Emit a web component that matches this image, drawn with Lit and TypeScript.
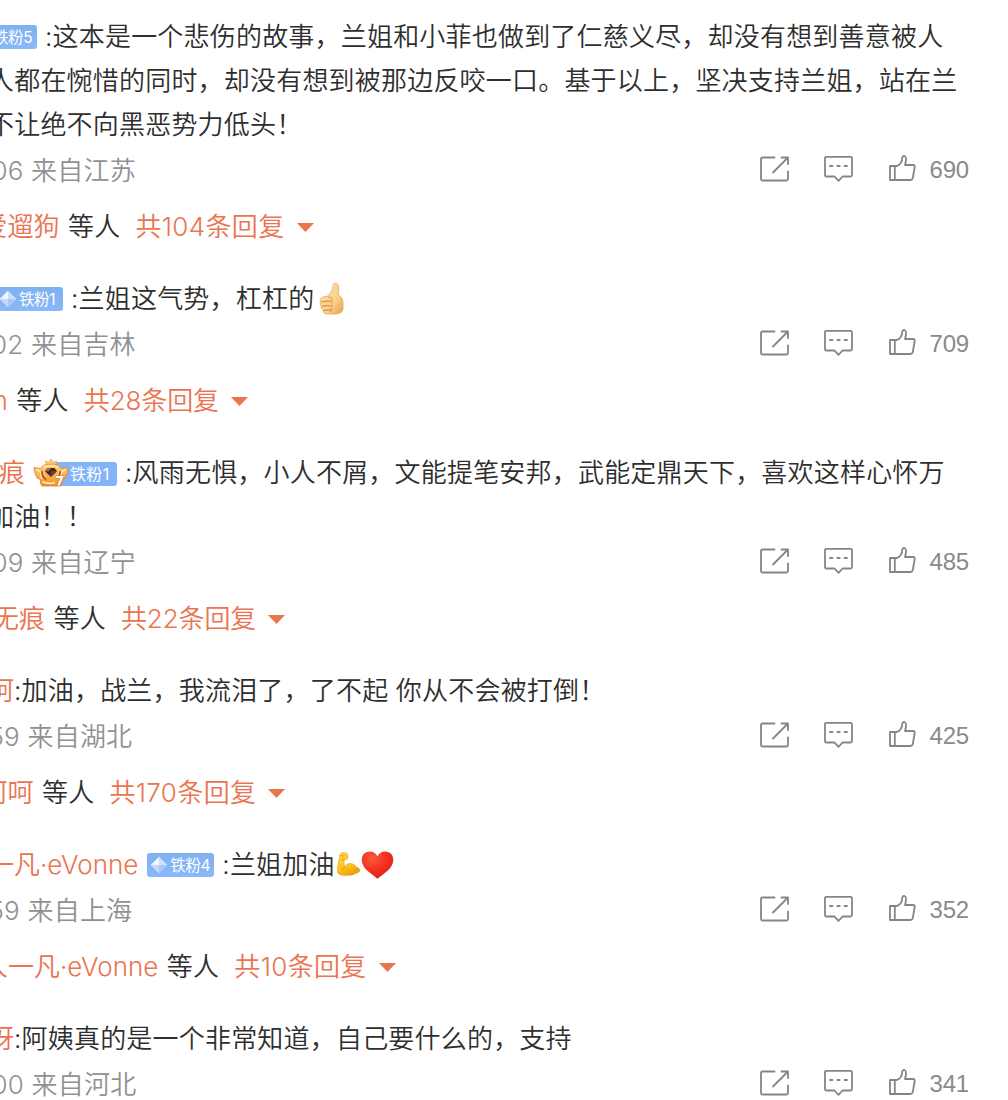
import { LitElement, html, css, nothing } from "lit";
import { customElement, property } from "lit/decorators.js";

type Run =
  | { kind: "text" | "name"; text: string }
  | { kind: "badge"; level: string; style: "gem" | "crown" }
  | { kind: "emoji"; name: "thumb" | "arm" | "heart" };

interface Line {
  shift: number;
  runs: Run[];
}

interface Comment {
  lines: Line[];
  time: string;
  timeShift: number;
  place: string;
  likes: number;
  reply?: { who: string; shift: number; count: number };
}

const t = (text: string): Run => ({ kind: "text", text });
const n = (text: string): Run => ({ kind: "name", text });

const comments: Comment[] = [
  {
    lines: [
      {
        shift: -39,
        runs: [
          { kind: "badge", level: "5", style: "gem" },
          t(":这本是一个悲伤的故事，兰姐和小菲也做到了仁慈义尽，却没有想到善意被人"),
        ],
      },
      { shift: -12, runs: [t("人都在惋惜的同时，却没有想到被那边反咬一口。基于以上，坚决支持兰姐，站在兰")] },
      { shift: -12, runs: [t("不让绝不向黑恶势力低头！")] },
    ],
    time: "06",
    timeShift: -8.5,
    place: "江苏",
    likes: 690,
    reply: { who: "爱遛狗", shift: -18.5, count: 104 },
  },
  {
    lines: [
      {
        shift: -13,
        runs: [
          { kind: "badge", level: "1", style: "gem" },
          t(":兰姐这气势，杠杠的"),
          { kind: "emoji", name: "thumb" },
        ],
      },
    ],
    time: "02",
    timeShift: -9,
    place: "吉林",
    likes: 709,
    reply: { who: "n", shift: -7.5, count: 28 },
  },
  {
    lines: [
      {
        shift: -1,
        runs: [
          n("痕"),
          { kind: "badge", level: "1", style: "crown" },
          t(":风雨无惧，小人不屑，文能提笔安邦，武能定鼎天下，喜欢这样心怀万"),
        ],
      },
      { shift: -12, runs: [t("加油！！")] },
    ],
    time: "09",
    timeShift: -8.5,
    place: "辽宁",
    likes: 485,
    reply: { who: "无痕", shift: -7, count: 22 },
  },
  {
    lines: [{ shift: -12, runs: [n("呵"), t(":加油，战兰，我流泪了，了不起 你从不会被打倒！")] }],
    time: "59",
    timeShift: -11.5,
    place: "湖北",
    likes: 425,
    reply: { who: "呵呵", shift: -18.5, count: 170 },
  },
  {
    lines: [
      {
        shift: -12,
        runs: [
          n("一凡·eVonne"),
          { kind: "badge", level: "4", style: "gem" },
          t(":兰姐加油"),
          { kind: "emoji", name: "arm" },
          { kind: "emoji", name: "heart" },
        ],
      },
    ],
    time: "59",
    timeShift: -11.5,
    place: "上海",
    likes: 352,
    reply: { who: "人一凡·eVonne", shift: -18, count: 10 },
  },
  {
    lines: [{ shift: -12, runs: [n("呀"), t(":阿姨真的是一个非常知道，自己要什么的，支持")] }],
    time: "00",
    timeShift: -8.5,
    place: "河北",
    likes: 341,
  },
];

const gem = html`<svg class="gem" width="18" height="18" viewBox="0 0 18 18">
  <path d="M9 1 L17 9 L9 17 L1 9Z" fill="#c4dafc" stroke="#c4dafc" stroke-linejoin="round" />
  <path d="M9 1 L17 9 L9 9Z" fill="#c9defd" />
  <path d="M9 1 L9 9 L1 9Z" fill="#f1f6ff" />
  <path d="M9 9 L17 9 L9 17Z" fill="#a9c6f8" />
</svg>`;

const crown = html`<svg class="crown" width="36" height="30" viewBox="0 0 36 30">
  <defs>
    <linearGradient id="gold" x1="0" y1="0" x2="0" y2="1">
      <stop offset="0" stop-color="#ffd07c" />
      <stop offset=".55" stop-color="#fbb14e" />
      <stop offset="1" stop-color="#ee8a30" />
    </linearGradient>
  </defs>
  <path d="M12.500 3 L15.500 4.500 L18 1 L20.500 4.500 L23.500 3 L22.500 8 H13.500Z" fill="#ffcd80" stroke="#f0a04a" stroke-width=".8" />
  <path d="M1 9.500 L7.500 10.500 Q10 6 18 6 Q26 6 28.500 10.500 L35 9.500 Q34.500 15 32.500 20 L29 21.500 Q29.500 24 28 28 H9 Q6.500 25 7.500 21.500 L4 20 Q1.500 15 1 9.500Z" fill="url(#gold)" stroke="#e08a35" stroke-width=".9" stroke-linejoin="round" />
  <path d="M3.500 11.500 L7.500 14 L8.500 21 M32.500 11.500 L28.500 14 L27.500 18 M11 9 Q18 6.500 25 9" fill="none" stroke="#ffe8b6" stroke-width="1.500" />
  <path d="M9 13 Q8 18 13 21.500 M27 13 Q28 17 23 20.500" fill="none" stroke="#8e4a24" stroke-width="1.400" />
  <path d="M14.500 10 H21.500 L24 13.200 L18 19 L12 13.200Z" fill="#4f241d" />
  <path d="M14.500 10 H18 L16 13.200 H12Z" fill="#9c6c5e" />
  <path d="M18 13.200 H24 L18 19Z" fill="#7b4034" />
  <path d="M9.500 24 Q16 26.500 22 24.500" fill="none" stroke="#ffefc4" stroke-width="1.800" />
  <path d="M23 19 H29 L25.500 27.500" fill="none" stroke="#ec8b34" stroke-width="3.600" />
  <path d="M23 19 H29 L25.500 27.500" fill="none" stroke="#fff" stroke-width="2" />
</svg>`;

const emojis = {
  thumb: html`<svg class="thumb" width="25" height="33" viewBox="0 0 25 33">
    <defs>
      <linearGradient id="skin" x1="0" y1="0" x2="1" y2="1">
        <stop offset="0" stop-color="#ffe3a8" />
        <stop offset=".6" stop-color="#fbd28a" />
        <stop offset="1" stop-color="#e5a04e" />
      </linearGradient>
    </defs>
    <path d="M14.500 2 Q18-.5 19.500 4 Q20.200 8 19 13 Q24 15 24 21 V27 Q23 32 16 32 H8 Q4 32 4 28 Q1.500 27 2.500 24.500 Q0 23 1.500 20 Q0 16 4 15 L9 14 Q14 9 14.500 2Z" fill="url(#skin)" stroke="#e0a557" stroke-width=".7" />
    <path d="M3 20 Q8 18.500 12 19.500 M3 24.500 Q8 23 12 24 M5 28.500 Q9 27.500 12 28" fill="none" stroke="#d09040" stroke-width="1.200" stroke-linecap="round" />
    <path d="M9 15 Q14 15 12.500 18 Q14 19.500 12.500 21.500 Q14 23 12.500 25.500 Q14 28 11 30" fill="none" stroke="#d79a4b" stroke-width=".9" />
  </svg>`,
  arm: html`<svg class="arm" width="25" height="26" viewBox="0 0 26 26">
    <defs>
      <linearGradient id="bicep" x1="0" y1="0" x2=".4" y2="1">
        <stop offset="0" stop-color="#ffd84a" />
        <stop offset=".7" stop-color="#fcc21f" />
        <stop offset="1" stop-color="#ee9e12" />
      </linearGradient>
    </defs>
    <path d="M4 3 Q6 .5 9 1 Q12 1 12.500 4 Q13 7 11 8.500 L8.500 9 Q8 12 9 16 Q11 12 16 12.500 Q20 13 21 16.500 Q24 16.500 25 19 Q25 21 23 22 Q17 25.500 9 25 Q3 24.500 1.500 22 Q1 18 2.500 12Z" fill="url(#bicep)" stroke="#eba51c" stroke-width=".6" />
    <path d="M9 16 Q8.500 18 6.500 19 M21 16.500 Q22 18 21.500 19" fill="none" stroke="#d98a10" stroke-width="1" stroke-linecap="round" />
    <path d="M5 4 Q7 5.500 9 4 M8.500 9 Q6.500 9 6.500 7" fill="none" stroke="#d98a10" stroke-width=".9" />
  </svg>`,
  heart: html`<svg class="heart" width="33" height="28" viewBox="0 0 34 29">
    <defs>
      <radialGradient id="red" cx=".35" cy=".25" r=".8">
        <stop offset="0" stop-color="#ff5a3c" />
        <stop offset=".55" stop-color="#f2301f" />
        <stop offset="1" stop-color="#d81e1c" />
      </radialGradient>
    </defs>
    <path d="M17 28.800 Q14.500 26.500 10 23.200 Q.6 16.500 .6 9 Q1 1 9 .6 Q14.500 .8 17 5.500 Q19.500 .8 25 .6 Q33 1 33.400 9 Q33.400 16.500 24 23.200 Q19.500 26.500 17 28.800Z" fill="url(#red)" />
  </svg>`,
};

@customElement("fan-badge")
class FanBadge extends LitElement {
  @property() level = "1";
  @property() look = "gem";
  static styles = css`
    :host {
      display: flex;
      align-items: center;
      height: 44px;
      margin: 0 8px 0 9px;
    }
    .pill {
      box-sizing: border-box;
      display: flex;
      align-items: center;
      height: 24px;
      width: 67px;
      padding-left: 3px;
      border-radius: 3px;
      background: linear-gradient(#7fb0f2, #8ab8f8);
      color: #fff;
      font: 15.5px/24px Inter, "Noto Sans CJK SC", sans-serif;
      white-space: nowrap;
    }
    .gem {
      flex: none;
      margin-right: 2px;
    }
    .crownpill {
      width: 83px;
      margin-top: 2px;
      background: linear-gradient(90deg, transparent 18px, #84b4f7 18px);
      padding-left: 0;
    }
    .crown {
      flex: none;
      margin: -3px 1px 0 -1px;
    }
    .label {
      padding-top: 1px;
      letter-spacing: -0.4px;
    }
    .crownpill .label {
      margin-top: -2px;
      font-size: 16px;
      letter-spacing: 0.3px;
    }
  `;
  render() {
    const isCrown = this.look === "crown";
    return html`<span class="pill ${isCrown ? "crownpill" : ""}"
      >${isCrown ? crown : gem}<span class="label">铁粉${this.level}</span></span
    >`;
  }
}

@customElement("comment-actions")
class CommentActions extends LitElement {
  @property({ type: Number }) likes = 0;
  static styles = css`
    :host {
      display: flex;
      align-items: center;
      height: 44px;
      margin-left: auto;
      padding-right: 39px;
    }
    svg {
      display: block;
      flex: none;
      margin-top: -3px;
      fill: none;
      stroke: #858585;
      stroke-width: 1.8;
      stroke-linejoin: round;
      stroke-linecap: round;
    }
    .share {
      margin-right: 34px;
    }
    .talk {
      margin-right: 34.5px;
    }
    .like {
      margin-right: 14px;
    }
    .count {
      font: 24px/44px "Liberation Sans", Arial, sans-serif;
      letter-spacing: -0.2px;
      color: #8a8a8a;
    }
  `;
  render() {
    return html`
      <svg class="share" width="30" height="28" viewBox="0 0 30 28">
        <path d="M15.500 2.500 H3.500 Q2 2.500 2 4 V24 Q2 25.500 3.500 25.500 H27.500 Q29 25.500 29 24 V16.500" />
        <path d="M14 17.500 L28 3.500 M22.500 2.500 H29 V9" />
      </svg>
      <svg class="talk" width="30" height="28" viewBox="0 0 30 28">
        <path d="M3.500 1.800 H27.500 Q29 1.800 29 3.300 V20 Q29 21.500 27.500 21.500 H19.500 L15.500 25.800 L11.500 21.500 H3.500 Q2 21.500 2 20 V3.300 Q2 1.800 3.500 1.800Z" />
        <path d="M7 11 H9.500 M14.300 11 H16.700 M21.500 11 H24" />
      </svg>
      <svg class="like" width="28" height="28" viewBox="0 0 28 28">
        <path d="M2 11 H9 Q14 9 14.200 3 Q14.800 .4 16.600 1 Q19.300 2 17 10 H25 Q27 10.200 26.700 12 L24.800 23 Q24.300 25 22.500 25 H2Z M6.800 11 V25" />
      </svg>
      <span class="count">${this.likes}</span>
    `;
  }
}

@customElement("app-root")
class AppRoot extends LitElement {
  static styles = css`
    :host {
      display: block;
      width: 1008px;
      height: 1100px;
      overflow: hidden;
      background: #fff;
    }
    .feed {
      padding-top: 15px;
      font-family: Inter, "Noto Sans CJK SC", sans-serif;
      font-size: 26px;
      font-weight: 350;
      line-height: 44px;
      letter-spacing: 0.2px;
      color: #2e2e2e;
    }
    .line,
    .meta,
    .reply {
      display: flex;
      height: 44px;
      white-space: pre;
    }
    .meta {
      margin-top: 2px;
      color: #919191;
    }
    .meta > comment-actions {
      margin-top: -1px;
    }
    .reply {
      margin: 12px 0 28px;
    }
    .name,
    .total {
      color: #eb7350;
    }
    .name,
    .who {
      letter-spacing: 0;
    }
    .who {
      margin-right: 8.5px;
      color: #eb7350;
    }
    .total {
      margin-left: 15px;
      letter-spacing: -0.1px;
    }
    .airy {
      letter-spacing: 0.35px;
    }
    .caret {
      align-self: center;
      width: 17px;
      height: 9px;
      margin: 0 0 0 12px;
      fill: #eb7350;
    }
    .thumb {
      margin: 5px 0 0 5px;
    }
    .arm {
      margin: 8px 0 0 1px;
    }
    .heart {
      margin-top: 8px;
    }
  `;

  private run(r: Run) {
    switch (r.kind) {
      case "badge":
        return html`<fan-badge level=${r.level} look=${r.style}></fan-badge>`;
      case "emoji":
        return emojis[r.name];
      default:
        return html`<span class=${r.kind}>${r.text}</span>`;
    }
  }

  private comment(c: Comment) {
    return html`<article>
      ${c.lines.map(
        (l) => html`<div class="line" style="margin-left:${l.shift}px">${l.runs.map((r) => this.run(r))}</div>`
      )}
      <div class="meta"
        ><span style="margin-left:${c.timeShift}px">${c.time} 来自${c.place}</span
        ><comment-actions likes=${c.likes}></comment-actions
      ></div>
      ${c.reply
        ? html`<div class="reply" style="margin-left:${c.reply.shift}px"
            ><span class="who">${c.reply.who}</span><span>等人</span
            ><span class="total ${String(c.reply.count).includes("1") ? "airy" : ""}">共${c.reply.count}条回复</span
            ><svg class="caret" viewBox="0 0 17 9"><path d="M0 0H17L8.500 9Z" /></svg
          ></div>`
        : nothing}
    </article>`;
  }

  render() {
    return html`<main class="feed">${comments.map((c) => this.comment(c))}</main>`;
  }
}
